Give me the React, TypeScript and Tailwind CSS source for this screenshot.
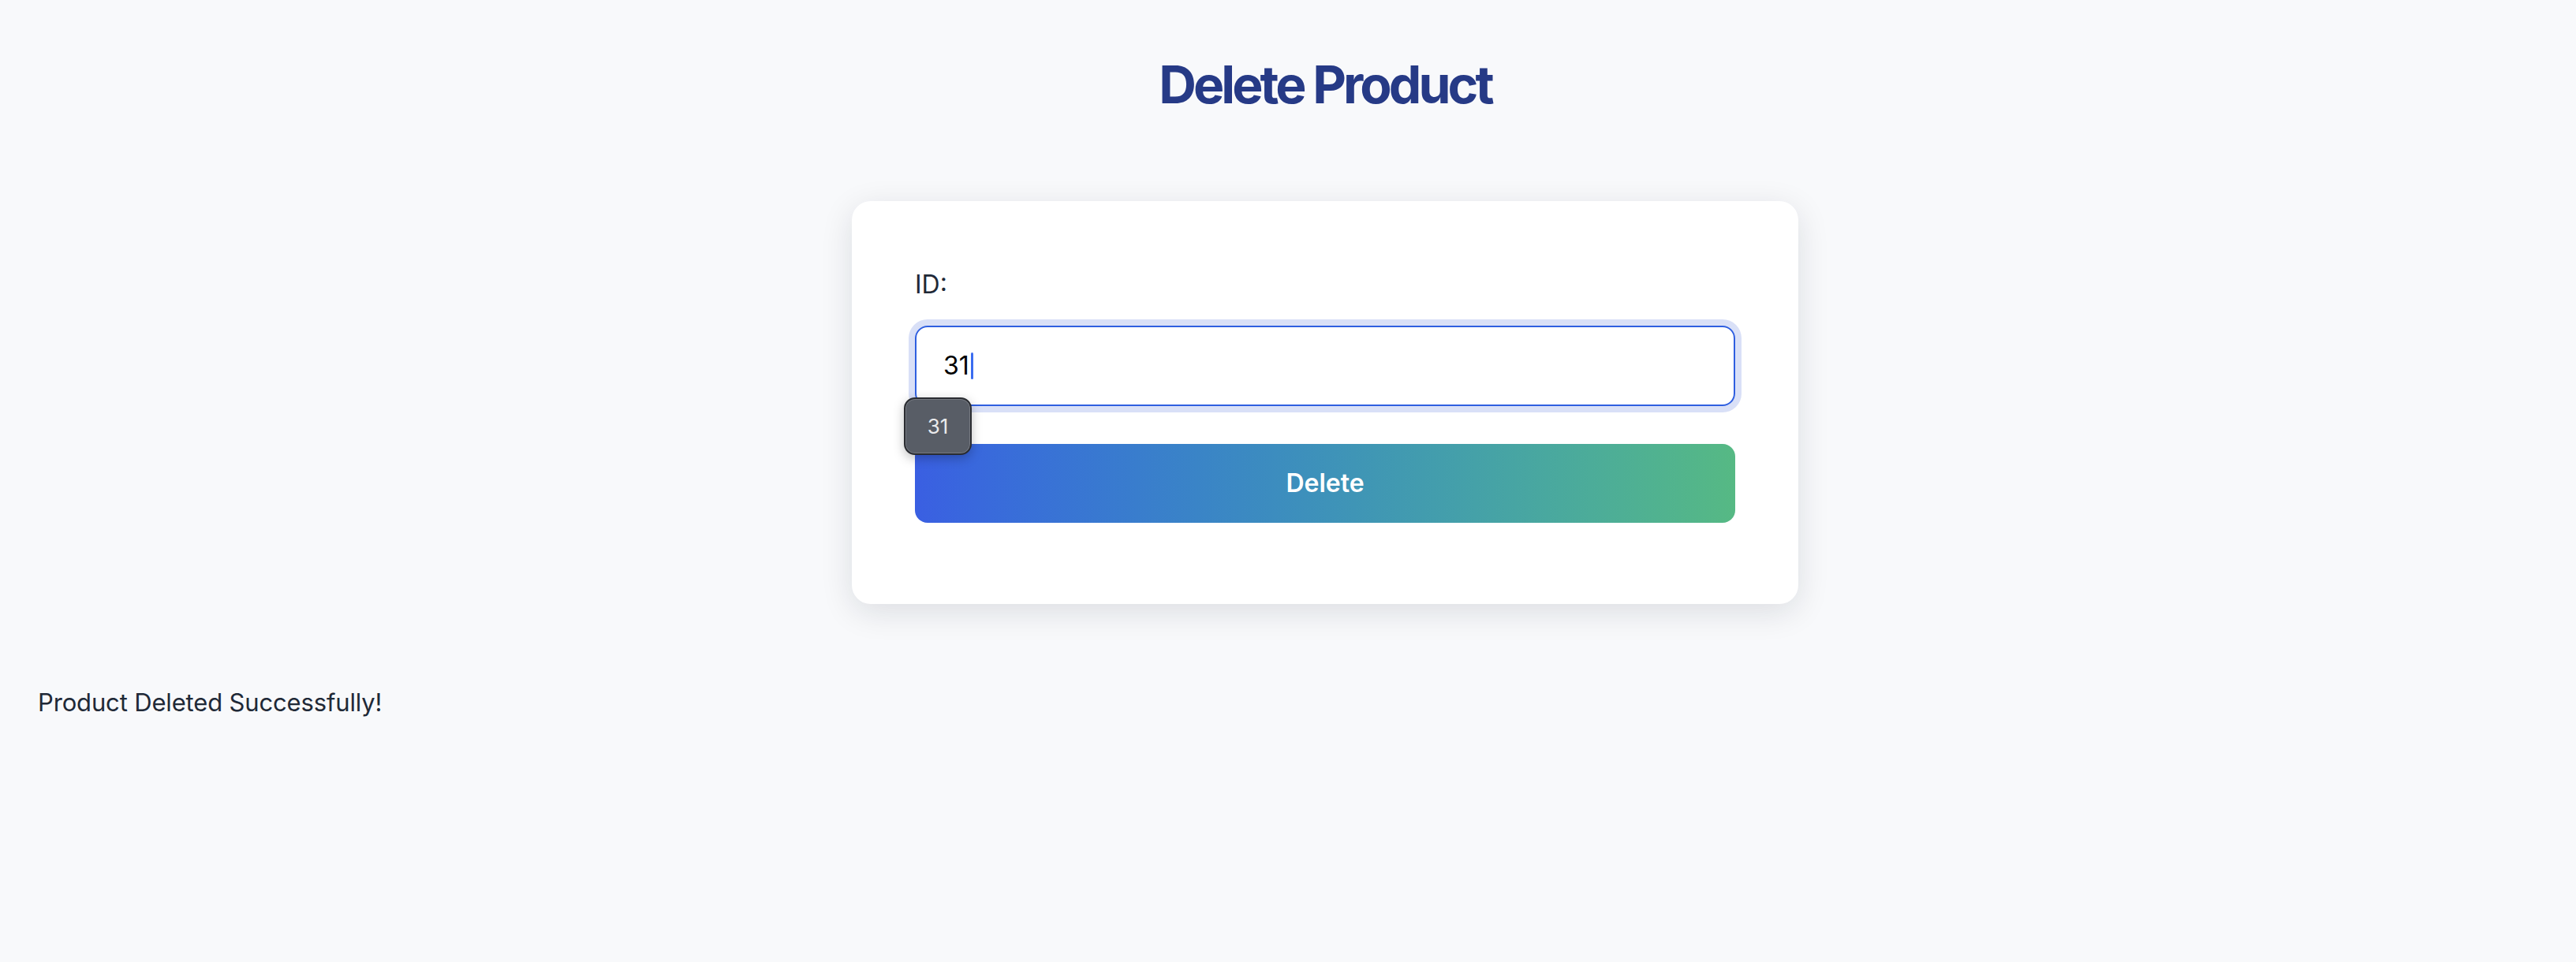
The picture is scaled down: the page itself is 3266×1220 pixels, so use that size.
import React from "react";

export default function App() {
  return (
    <div
      className="min-h-screen bg-[#f8f9fb] p-12 text-[#1f2937]"
      style={{ fontFamily: "Inter, 'Liberation Sans', sans-serif" }}
    >
      {/* CENTER COLUMN */}
      <div className="flex flex-col items-center pl-[94px]">
        {/* TITLE */}
        <h1 className="mt-[20px] text-[66px] leading-[79px] font-bold tracking-[-0.06em] text-[#263a86]">
          Delete Product
        </h1>

        {/* CARD */}
        <div className="mt-[108px] w-[1200px] rounded-3xl bg-white pt-[82px] pr-20 pb-[103px] pl-20 shadow-[0_10px_40px_rgba(15,23,42,0.12)]">
          {/* LABEL */}
          <label className="block text-[32px] leading-[48px] text-[#1f2937]">
            ID:
          </label>

          {/* INPUT */}
          <div className="relative mt-7">
            <div className="flex h-[102px] items-center rounded-2xl border-2 border-[#2f5fe0] px-[34px] ring-8 ring-[#d9e0f7]">
              <span className="text-[32px] text-black">31</span>
              <span className="ml-[2px] h-[34px] w-[3px] rounded-sm bg-[#3b6cf0]" />
            </div>

            {/* TOOLTIP */}
            <div className="absolute left-[-14px] top-[91px] z-10 flex h-[73px] w-[86px] items-center justify-center rounded-[14px] border-2 border-[#2a2c31] bg-[#585d66] shadow-[0_4px_14px_rgba(0,0,0,0.25),inset_0_0_0_1px_rgba(255,255,255,0.18)]">
              <span className="text-[26px] text-[#e9eaec]">31</span>
            </div>
          </div>

          {/* BUTTON */}
          <button className="mt-[48px] flex h-[100px] w-full items-center justify-center rounded-2xl bg-linear-to-r from-[#3a5fe2] to-[#56b984] text-[32px] font-semibold text-white">
            Delete
          </button>
        </div>
      </div>

      {/* MESSAGE */}
      <p className="mt-[101px] text-[31px] leading-[48px] tracking-[-0.005em] text-[#1f2937]">
        Product Deleted Successfully!
      </p>
    </div>
  );
}
